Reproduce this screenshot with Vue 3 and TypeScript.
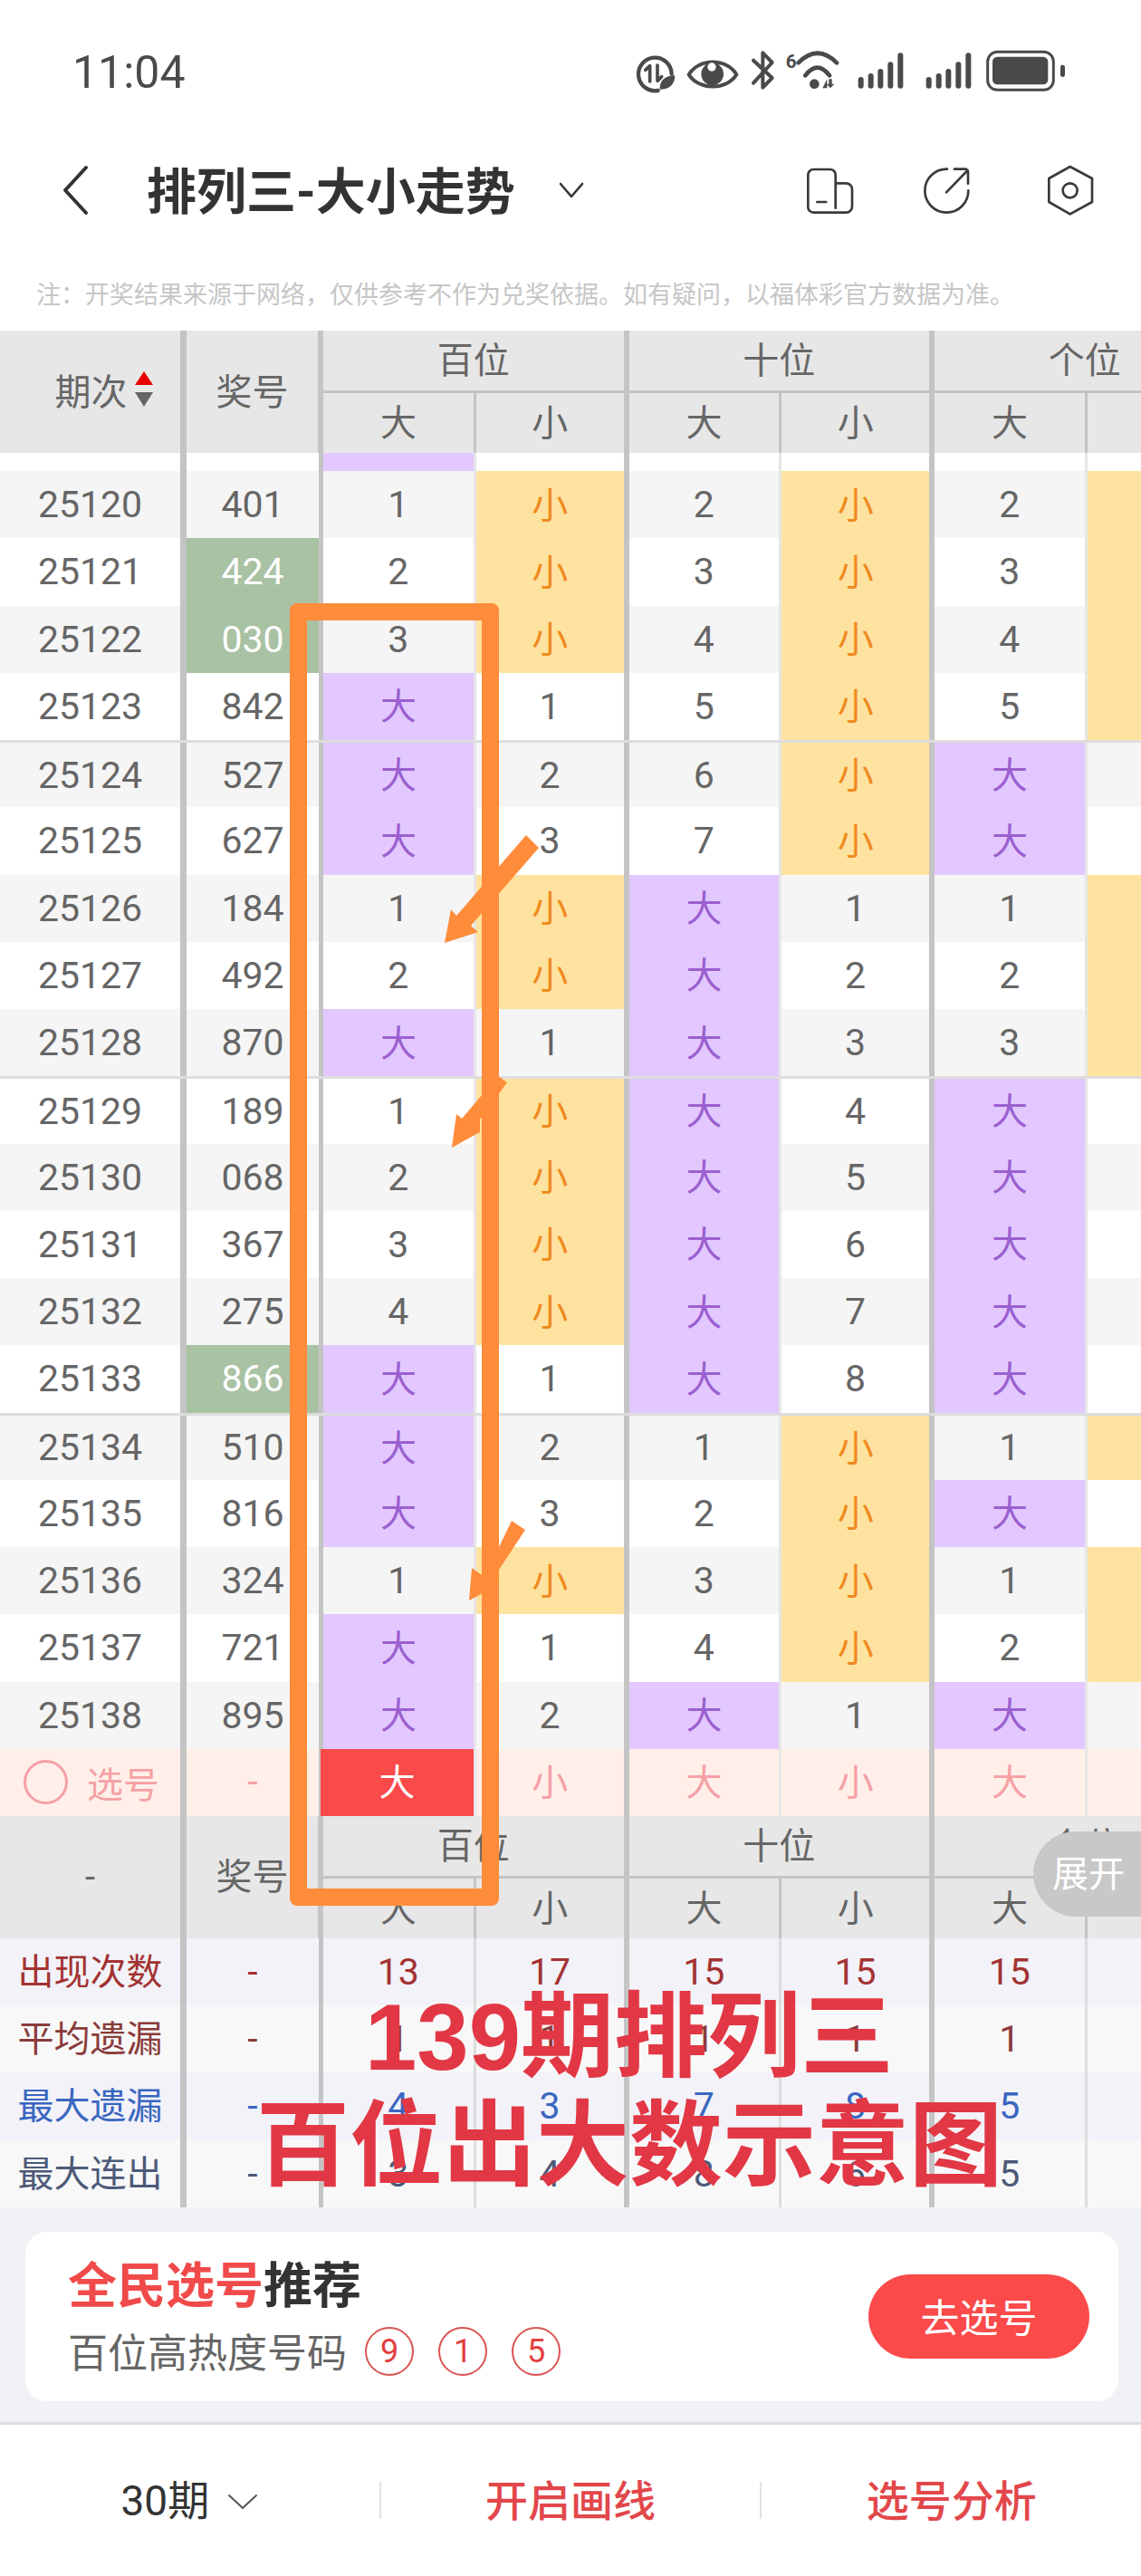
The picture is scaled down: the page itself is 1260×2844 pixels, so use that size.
<script setup lang="ts">
import { computed } from 'vue'

interface Cell {
  key: string
  text: string | number
  kind: 'big' | 'small' | 'plain'
  odd: boolean
}

const draws = [
  '401', '424', '030', '842', '527', '627', '184', '492', '870', '189',
  '068', '367', '275', '866', '510', '816', '324', '721', '895',
]
const repeated = ['424', '030', '866']
const positions = ['百位', '十位', '个位']

const rows = computed(() => {
  // misses carried in from the rows above the scrolled edge
  const bigMiss = [0, 1, 1]
  const smallMiss = [0, 0, 0]
  return draws.map((num, i) => {
    const cells: Cell[] = []
    for (let p = 0; p < 3; p++) {
      const isBig = Number(num[p]) >= 5
      bigMiss[p] = isBig ? 0 : bigMiss[p] + 1
      smallMiss[p] = isBig ? smallMiss[p] + 1 : 0
      cells.push({ key: `b${p}`, text: isBig ? '大' : bigMiss[p], kind: isBig ? 'big' : 'plain', odd: true })
      cells.push({ key: `s${p}`, text: isBig ? smallMiss[p] : '小', kind: isBig ? 'plain' : 'small', odd: false })
    }
    return { issue: 25120 + i, num, cells, alt: i % 2 === 0, group: i > 0 && (i + 1) % 5 === 0 && i < 15 }
  })
})

const stats = [
  { label: '出现次数', tone: 'red', values: [13, 17, 15, 15, 15, ''] },
  { label: '平均遗漏', tone: 'brown', values: [1, 1, 1, 1, 1, ''] },
  { label: '最大遗漏', tone: 'blue', values: [4, 3, 7, 8, 5, ''] },
  { label: '最大连出', tone: 'slate', values: [3, 4, 8, 6, 5, ''] },
]

const picks = ['大', '小', '大', '小', '大', '小']
const hotNumbers = [9, 1, 5]
const noteText = '注\uFF1A开奖结果来源于网络\uFF0C仅供参考不作为兑奖依据。如有疑问\uFF0C以福体彩官方数据为准。'
</script>

<template>
  <div class="page">
    <div class="status">
      <span class="time">11:04</span>
      <svg class="status-icons" width="520" height="60" viewBox="0 0 1560 180">
        <g fill="none" stroke="#4a4a4a" stroke-linecap="round" stroke-linejoin="round">
          <path d="M140 150A55 55 0 1 1 185 95" stroke-width="13" />
          <path d="M113 120V68L98 82M138 66V118L152 104" stroke-width="11" />
          <path d="M242 97C275 42 368 42 400 97C368 150 275 150 242 97Z" stroke-width="12" />
          <path d="M456 50L518 108L487 140V25L518 57L456 125" stroke-width="12" />
          <path d="M605 58Q668 -5 732 58M628 100Q668 48 708 100" stroke-width="14" />
          <rect x="1232" y="22" width="218" height="126" rx="32" stroke-width="9" />
        </g>
        <g fill="#4a4a4a">
          <path d="M146 146C144 116 165 100 196 100C196 130 176 148 146 146Z" />
          <circle cx="320" cy="95" r="37" />
          <circle cx="658" cy="128" r="16" />
          <path d="M685 142L700 112V142ZM706 112H716V128H724L711 142L698 128H706Z" />
          <text x="563" y="74" class="six">6</text>
          <rect x="803" y="105" width="18" height="38" rx="9" />
          <rect x="836" y="93" width="18" height="50" rx="9" />
          <rect x="868" y="78" width="18" height="65" rx="9" />
          <rect x="901" y="55" width="18" height="88" rx="9" />
          <rect x="934" y="25" width="18" height="118" rx="9" />
          <rect x="1028" y="105" width="18" height="38" rx="9" />
          <rect x="1061" y="93" width="18" height="50" rx="9" />
          <rect x="1093" y="78" width="18" height="65" rx="9" />
          <rect x="1126" y="55" width="18" height="88" rx="9" />
          <rect x="1159" y="25" width="18" height="118" rx="9" />
          <rect x="1248" y="38" width="184" height="92" rx="16" />
          <rect x="1473" y="65" width="15" height="40" rx="7" />
        </g>
        <circle cx="318" cy="72" r="14" fill="#fff" />
      </svg>
    </div>

    <div class="nav">
      <svg width="30" height="56" viewBox="0 0 30 56">
        <path d="M27 3L4 28L27 53" fill="none" stroke="#333" stroke-width="4" stroke-linecap="round" stroke-linejoin="round" />
      </svg>
      <span class="title">排列三-大小走势</span>
      <svg class="title-arrow" width="28" height="18" viewBox="0 0 28 18">
        <path d="M2 2L14 16L26 2" fill="none" stroke="#333" stroke-width="2.6" stroke-linecap="round" stroke-linejoin="round" />
      </svg>
      <svg class="nav-icons" width="340" height="75" viewBox="0 0 1020 225">
        <g fill="none" stroke="#3a3a3a" stroke-width="8" stroke-linecap="round" stroke-linejoin="round">
          <path d="M128 170V60a18 18 0 0 0-18-18H55a18 18 0 0 0-18 18v107a18 18 0 0 0 18 18h108a20 20 0 0 0 20-20v-57a20 20 0 0 0-20-20h-35" />
          <path d="M67 150h30" />
          <path d="M498 41A72 72 0 1 0 568 112" />
          <path d="M495 118L566 45M522 41h35a10 10 0 0 1 10 10v38" />
          <path d="M905 33L978 72V150L905 190L835 150V72Z" />
          <circle cx="905" cy="112" r="24" />
        </g>
      </svg>
    </div>

    <div class="note">{{ noteText }}</div>

    <div class="table">
      <div class="head">
        <div class="h-main cjk sort-cell">
          期次
          <span class="sort"><i class="up"></i><i class="down"></i></span>
        </div>
        <div class="h-main cjk">奖号</div>
        <div v-for="p in positions" :key="p" class="h-group cjk">{{ p }}</div>
        <template v-for="n in 6" :key="n">
          <div :class="['h-sub cjk', { thick: n % 2 === 0 }]">{{ n % 2 ? '大' : '小' }}</div>
        </template>
      </div>

      <div class="row clipped">
        <div class="c first"></div>
        <div class="c second"></div>
        <div class="c thin big"></div>
        <div class="c thick"></div>
        <div class="c thin"></div>
        <div class="c thick"></div>
        <div class="c thin"></div>
        <div class="c thick"></div>
      </div>

      <div v-for="r in rows" :key="r.issue" :class="['row', { alt: r.alt, group: r.group }]">
        <div class="c first">{{ r.issue }}</div>
        <div :class="['c second', { repeat: repeated.includes(r.num) }]">{{ r.num }}</div>
        <div
          v-for="cell in r.cells"
          :key="cell.key"
          :class="['c', cell.odd ? 'thin' : 'thick', cell.kind]"
        >
          {{ cell.text }}
        </div>
      </div>

      <div class="row pick-row">
        <div class="c first pick-label"><span class="radio"></span>选号</div>
        <div class="c second">-</div>
        <div
          v-for="(t, i) in picks"
          :key="i"
          :class="['c cjk', i % 2 ? 'thick' : 'thin', { picked: i === 0 }]"
        >
          {{ t }}
        </div>
      </div>

      <div class="head">
        <div class="h-main">-</div>
        <div class="h-main cjk">奖号</div>
        <div v-for="p in positions" :key="p" class="h-group cjk">{{ p }}</div>
        <template v-for="n in 6" :key="n">
          <div :class="['h-sub cjk', { thick: n % 2 === 0 }]">{{ n % 2 ? '大' : '小' }}</div>
        </template>
      </div>

      <div v-for="(s, i) in stats" :key="s.label" :class="['row stat', s.tone, { tint: i % 2 === 0 }]">
        <div class="c first cjk">{{ s.label }}</div>
        <div class="c second">-</div>
        <div v-for="(v, j) in s.values" :key="j" :class="['c', j % 2 ? 'thick' : 'thin']">{{ v }}</div>
      </div>
    </div>

    <div class="recommend">
      <div class="card">
        <div class="card-left">
          <div class="card-title"><span class="red">全民选号</span>推荐</div>
          <div class="card-sub">
            <span class="sub-text">百位高热度号码</span>
            <span v-for="n in hotNumbers" :key="n" class="ball">{{ n }}</span>
          </div>
        </div>
        <div class="go">去选号</div>
      </div>
    </div>

    <div class="footer">
      <div class="foot-item">
        <span class="periods">30期</span>
        <svg class="foot-arrow" width="34" height="18" viewBox="0 0 34 18">
          <path d="M2 2L17 16L32 2" fill="none" stroke="#555" stroke-width="2" stroke-linecap="round" stroke-linejoin="round" />
        </svg>
      </div>
      <div class="foot-item link">开启画线</div>
      <div class="foot-item link">选号分析</div>
    </div>

    <div class="expand">展开</div>

    <div class="frame"></div>
    <svg class="arrows" width="1260" height="2844" viewBox="0 0 1260 2844">
      <g fill="#ff8c3a">
        <polygon points="581,922 595,936 520,1022 528,1029 491,1041 498,1004 504,1011" />
        <polygon points="550,1188 560,1195 530,1236 530,1250 499,1267 504,1230 510,1235" />
        <polygon points="565,1679 580,1689 549,1736 550,1750 518,1767 521,1731 535,1741" />
      </g>
    </svg>
    <div class="caption">
      <div>139期排列三</div>
      <div>百位出大数示意图</div>
    </div>
  </div>
</template>

<style scoped>
.page {
  position: relative;
  width: 1260px;
  height: 2844px;
  overflow: hidden;
  background: #fff;
  color: #666;
  font-family: Roboto, "Noto Sans CJK SC", sans-serif;
}

.status {
  display: flex;
  align-items: center;
  height: 160px;
  padding: 0 60px 0 80px;
}

.time {
  font-size: 50px;
  color: #4a4a4a;
}

.status-icons {
  margin-left: auto;
}

.six {
  font-size: 62px;
  font-weight: 700;
}

.nav {
  display: flex;
  align-items: center;
  height: 100px;
  padding: 0 40px 0 68px;
}

.title {
  margin-left: 64px;
  padding-bottom: 6px;
  font-size: 55px;
  font-weight: 700;
  color: #333;
}

.title-arrow {
  margin-left: 48px;
}

.nav-icons {
  margin-left: auto;
}

.note {
  height: 105px;
  padding: 44px 0 0 40px;
  box-sizing: border-box;
  font-family: "Noto Sans CJK SC", sans-serif;
  font-size: 27px;
  line-height: 40px;
  color: #c6c6c6;
  white-space: nowrap;
}

.table {
  width: 1260px;
  overflow: hidden;
}

.head,
.row {
  display: grid;
  grid-template-columns: 206px 151px repeat(6, 168.75px);
  width: 1369.5px;
}

.head {
  grid-template-rows: 66px 69px;
  background: #e7e7e7;
  font-size: 40px;
}

.h-main,
.h-group,
.h-sub {
  display: flex;
  align-items: center;
  justify-content: center;
  box-sizing: border-box;
}

.cjk {
  padding-bottom: 6px;
}

.h-main {
  grid-row: span 2;
  border-right: 6px solid #c4c4c4;
}

.h-main:nth-child(1) {
  border-right-width: 7px;
}

.sort-cell {
  padding-left: 30px;
}

.sort {
  display: flex;
  flex-direction: column;
  gap: 8px;
  margin-left: 8px;
}

.sort i {
  display: block;
  width: 0;
  height: 0;
  border-left: 10px solid transparent;
  border-right: 10px solid transparent;
}

.sort .up {
  border-bottom: 15px solid #e60000;
}

.sort .down {
  border-top: 16px solid #666;
}

.h-group {
  grid-column: span 2;
  border-right: 6px solid #c4c4c4;
}

.h-sub {
  border-top: 3px solid #c4c4c4;
  border-right: 3px solid #c4c4c4;
}

.h-sub.thick {
  border-right-width: 6px;
}

.row {
  height: 74.26px;
  box-sizing: border-box;
  background: #fff;
  font-size: 41px;
}

.row.alt {
  background: #f5f5f5;
}

.row.group {
  border-top: 3px solid #ddd;
}

.row.clipped {
  height: 20px;
}

.c {
  display: flex;
  align-items: center;
  justify-content: center;
  box-sizing: border-box;
  min-width: 0;
}

.first {
  border-right: 7px solid #c4c4c4;
}

.second {
  border-right: 5px solid #c4c4c4;
}

.thin {
  border-right: 3px solid #e6e6e6;
}

.thick {
  border-right: 6px solid #c4c4c4;
}

.big {
  padding-bottom: 5px;
  background: #e2c8ff;
  color: #9b5fd0;
  font-size: 40px;
}

.small {
  padding-bottom: 5px;
  background: #fee2a0;
  color: #ef8a1f;
  font-size: 40px;
}

.repeat {
  background: #a9c2a4;
  color: #fff;
}

.pick-row {
  height: 74.1px;
  background: #ffefe8;
  color: #f5a0a5;
  font-size: 40px;
}

.pick-label {
  justify-content: flex-start;
  padding-left: 26px;
  gap: 21px;
}

.radio {
  width: 49px;
  height: 49px;
  box-sizing: border-box;
  border: 3px solid #f5a0a5;
  border-radius: 50%;
}

.picked {
  margin-left: -3px;
  background: #fa4a4a;
  color: #fff;
}

.stat {
  height: 74.25px;
  background: #f8f8f8;
}

.stat.tint {
  background: #f2f2f8;
}

.stat .first {
  font-size: 40px;
}

.stat .thin {
  border-right-color: #ddd;
}

.stat.red {
  color: #a33232;
}

.stat.brown {
  color: #8a3b3b;
}

.stat.blue {
  color: #3a66c0;
}

.stat.slate {
  color: #4c5a78;
}

.recommend {
  height: 240px;
  padding: 27px 25px 0 28px;
  box-sizing: border-box;
  background: #f1f2f6;
  border-bottom: 3px solid #ddd;
}

.card {
  display: flex;
  align-items: center;
  justify-content: space-between;
  height: 187px;
  padding: 0 32px 0 47px;
  box-sizing: border-box;
  border-radius: 24px;
  background: #fff;
}

.card-left {
  align-self: flex-start;
  padding-top: 36px;
}

.card-title {
  font-size: 54px;
  font-weight: 700;
  line-height: 50px;
  color: #333;
}

.red {
  color: #f04a4a;
}

.card-sub {
  display: flex;
  align-items: center;
  gap: 27px;
  margin-top: 14px;
  font-size: 44px;
  line-height: 58px;
}

.sub-text {
  margin-right: -7px;
  padding-top: 6px;
}

.ball {
  display: flex;
  align-items: center;
  justify-content: center;
  width: 54px;
  height: 54px;
  box-sizing: border-box;
  border: 2px solid #d9534f;
  border-radius: 50%;
  font-size: 36px;
  color: #e2403f;
}

.go {
  display: flex;
  align-items: center;
  justify-content: center;
  width: 244px;
  height: 93px;
  padding-bottom: 3px;
  box-sizing: border-box;
  border-radius: 47px;
  background: #fa4a4a;
  color: #fff;
  font-size: 43px;
}

.footer {
  display: flex;
  height: 167px;
  align-items: center;
}

.foot-item {
  display: flex;
  align-items: center;
  justify-content: center;
  gap: 20px;
  flex: 1;
  height: 41px;
  padding-bottom: 6px;
  box-sizing: border-box;
  font-size: 47px;
}

.foot-item + .foot-item {
  border-left: 2px solid #e2e2e2;
}

.periods {
  font-size: 46px;
  color: #333;
}

.foot-arrow {
  margin-top: 10px;
}

.link {
  color: #e2474b;
  font-weight: 500;
}

.expand {
  position: absolute;
  left: 1141px;
  top: 2022px;
  width: 119px;
  height: 94px;
  padding: 0 0 6px 21px;
  box-sizing: border-box;
  display: flex;
  align-items: center;
  border-radius: 47px 0 0 47px;
  background: #c8c8c8;
  color: #fff;
  font-size: 40px;
}

.frame {
  position: absolute;
  left: 320px;
  top: 666px;
  width: 231px;
  height: 1438px;
  box-sizing: border-box;
  border: 19px solid #ff8c3a;
  border-radius: 8px;
}

.arrows {
  position: absolute;
  left: 0;
  top: 0;
}

.caption {
  position: absolute;
  left: 180px;
  top: 2190px;
  width: 1030px;
  text-align: center;
  font-family: "Liberation Sans", "Noto Sans CJK SC", sans-serif;
  font-size: 103px;
  font-weight: 700;
  line-height: 120px;
  color: #e23744;
}
</style>
